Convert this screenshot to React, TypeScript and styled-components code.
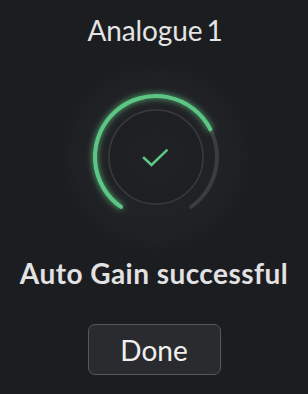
import React from "react";
import styled, { createGlobalStyle } from "styled-components";

const Global = createGlobalStyle`
  html, body { margin: 0; padding: 0; background: #1c1d20; }
  body { width: 308px; height: 394px; overflow: hidden; }
`;

const Page = styled.div`
  width: 308px;
  height: 394px;
  display: flex;
  flex-direction: column;
  align-items: center;
  background: #1c1d20;
  font-family: Lato, "Noto Sans", sans-serif;
  color: #e6e6e6;
`;

const Title = styled.h1`
  margin: 13px 0 0;
  font-size: 28px;
  line-height: 34px;
  font-weight: 400;
  color: #e4e4e4;
  letter-spacing: -0.1px;
  word-spacing: -3px;
  transform: translateX(1px);
`;

const KnobWrap = styled.div`
  margin-top: 10px;
  width: 200px;
  height: 200px;
  transform: translateX(2px);
`;

const Status = styled.p`
  margin: 0;
  font-size: 28px;
  line-height: 32px;
  font-weight: 700;
  color: #e2e2e2;
  letter-spacing: 0.45px;
`;

const DoneButton = styled.button`
  margin-top: 35px;
  width: 133px;
  height: 51px;
  border-radius: 7px;
  border: 1.5px solid #57585b;
  background: #2a2b2e;
  color: #f0f0f0;
  font-family: Lato, "Noto Sans", sans-serif;
  font-size: 28px;
  font-weight: 400;
  padding: 0;
  display: flex;
  align-items: center;
  justify-content: center;
`;

const CX = 100;
const CY = 100;
const R = 61;

function pt(deg: number, r = R) {
  const a = (deg * Math.PI) / 180;
  return [CX + r * Math.sin(a), CY - r * Math.cos(a)];
}

function arc(from: number, to: number) {
  const [x1, y1] = pt(from);
  const [x2, y2] = pt(to);
  const large = to - from > 180 ? 1 : 0;
  return `M ${x1.toFixed(2)} ${y1.toFixed(2)} A ${R} ${R} 0 ${large} 1 ${x2.toFixed(2)} ${y2.toFixed(2)}`;
}

function Knob() {
  return (
    <svg width="200" height="200" viewBox="0 0 200 200">
      <defs>
        <radialGradient id="halo" cx="50%" cy="50%" r="50%">
          <stop offset="0%" stopColor="#232427" />
          <stop offset="80%" stopColor="#202124" />
          <stop offset="100%" stopColor="#1c1d20" />
        </radialGradient>
        <radialGradient id="inner" cx="50%" cy="50%" r="50%">
          <stop offset="0%" stopColor="#212225" />
          <stop offset="100%" stopColor="#1e1f22" />
        </radialGradient>
        <filter id="glow" x="-30%" y="-30%" width="160%" height="160%">
          <feGaussianBlur stdDeviation="3" result="b" />
          <feMerge>
            <feMergeNode in="b" />
            <feMergeNode in="SourceGraphic" />
          </feMerge>
        </filter>
      </defs>
      <circle cx={CX} cy={CY} r="98" fill="url(#halo)" />
      <path d={arc(-145, 145)} fill="none" stroke="#3b3c3f" strokeWidth="4" strokeLinecap="round" />
      <path
        d={arc(-145, 63)}
        fill="none"
        stroke="#5cc683"
        strokeWidth="4"
        strokeLinecap="round"
        filter="url(#glow)"
      />
      <circle cx={CX} cy={CY} r="47" fill="url(#inner)" stroke="#3a3b3e" strokeWidth="1.5" />
      <path
        d="M 88 101 L 95.5 108 L 110.5 93.5"
        fill="none"
        stroke="#5cc683"
        strokeWidth="2.6"
        strokeLinecap="square"
      />
    </svg>
  );
}

export default function App() {
  return (
    <Page>
      <Global />
      <Title>Analogue 1</Title>
      <KnobWrap>
        <Knob />
      </KnobWrap>
      <Status>Auto Gain successful</Status>
      <DoneButton>Done</DoneButton>
    </Page>
  );
}
